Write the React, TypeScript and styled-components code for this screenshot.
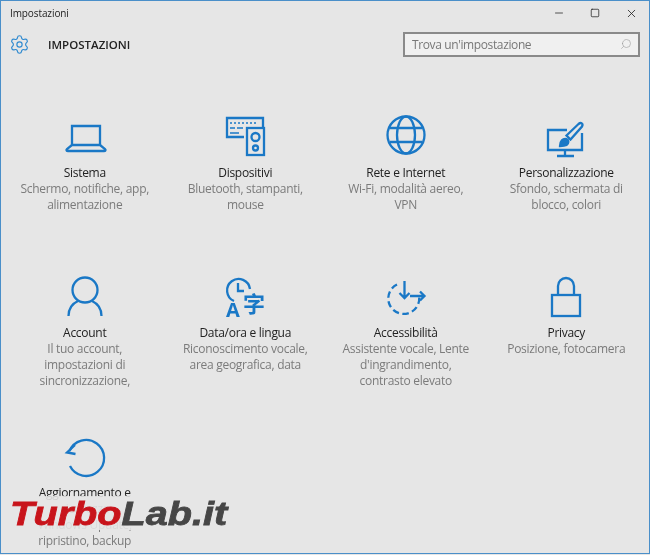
import React from "react";
import styled, { createGlobalStyle } from "styled-components";
import { Settings, Search, Minus, Square, X } from "lucide-react";

const Global = createGlobalStyle`
  html, body { margin: 0; padding: 0; background: #e6e6e6; }
  body { font-family: "Open Sans", "Noto Sans", "Liberation Sans", sans-serif; }
`;

const BLUE = "#1a78c6";

const Page = styled.div`
  position: relative;
  box-sizing: border-box;
  width: 650px;
  height: 554px;
  overflow: hidden;
  background: #e6e6e6;
  border: 1.5px solid #4a8fc9;
  filter: blur(0.3px);
`;

const TitleBar = styled.div`
  display: flex;
  align-items: center;
  justify-content: space-between;
  height: 24px;
  padding-left: 9px;
`;

const WindowName = styled.div`
  font-size: 10px;
  letter-spacing: -0.1px;
  color: #222;
`;

const Controls = styled.div`
  display: flex;
`;

const ControlBtn = styled.div`
  display: flex;
  align-items: center;
  justify-content: center;
  width: 36px;
  height: 24px;
  color: #222;
`;

const Header = styled.div`
  display: flex;
  align-items: center;
  justify-content: space-between;
  height: 38px;
  padding: 0 9px 0 8px;
`;

const Brand = styled.div`
  display: flex;
  align-items: center;
  gap: 18px;
`;

const BrandTitle = styled.div`
  font-size: 11.5px;
  font-weight: 600;
  color: #222;
`;

const SearchBox = styled.div`
  box-sizing: border-box;
  display: flex;
  align-items: center;
  justify-content: space-between;
  width: 237px;
  height: 25px;
  padding: 0 6px 0 7px;
  border: 2px solid #8a8a8a;
  background: #f0f0f0;
`;

const SearchText = styled.span`
  font-size: 12px;
  letter-spacing: -0.38px;
  color: #777;
`;

const SearchIcon = styled.span`
  display: flex;
  transform: scaleX(-1);
`;

const Grid = styled.div`
  display: grid;
  grid-template-columns: repeat(4, 160.5px);
  grid-auto-rows: 160px;
  margin-top: 50px;
  padding-left: 3.5px;
`;

const Card = styled.div`
  display: flex;
  flex-direction: column;
  align-items: center;
`;

const IconSvg = styled.svg`
  width: 60px;
  height: 48px;
  margin-bottom: 4px;
`;

const CardTitle = styled.div`
  font-size: 12px;
  letter-spacing: -0.28px;
  line-height: 16px;
  color: #222;
  white-space: nowrap;
`;

const CardLine = styled.div`
  font-size: 12px;
  letter-spacing: -0.28px;
  line-height: 16px;
  color: #7b7b7b;
  white-space: nowrap;
`;

const LangText = styled.text`
  font-family: "Open Sans", sans-serif;
`;

const CjkText = styled.text`
  font-family: "Noto Sans CJK SC", sans-serif;
`;

const Watermark = styled.div`
  position: absolute;
  left: 9px;
  top: 495px;
  display: flex;
  width: 222px;
  height: 34px;
  background: rgba(230, 230, 230, 0.88);
  font-family: "Liberation Sans", sans-serif;
  font-size: 34px;
  line-height: 34px;
  font-weight: 700;
  font-style: italic;
  white-space: nowrap;
  -webkit-text-stroke: 0.8px currentColor;
`;

const WatermarkInner = styled.div`
  display: flex;
  transform: scaleX(1.165);
  transform-origin: left center;
`;

const Turbo = styled.span`
  color: #c8141b;
`;

const Lab = styled.span`
  color: #464646;
`;

const Ico = ({ children }: { children: React.ReactNode }) => (
  <IconSvg viewBox="0 0 60 48" fill="none" stroke={BLUE} strokeWidth={2.3}>
    {children}
  </IconSvg>
);

const settingsItems = [
  {
    title: "Sistema",
    lines: ["Schermo, notifiche, app,", "alimentazione"],
    icon: (
      <Ico>
        <path d="M17 32V13h28v19" />
        <path d="M17 32l-5 4c-1 1-.5 2 1 2h36c1.500 0 2-1 1-2l-5-4z" />
      </Ico>
    ),
  },
  {
    title: "Dispositivi",
    lines: ["Bluetooth, stampanti,", "mouse"],
    icon: (
      <Ico>
        <path d="M29 24H12V5h36v9" />
        <rect x="32" y="15" width="17" height="27" />
        <circle cx="40.500" cy="24" r="4" />
        <circle cx="40.500" cy="35" r="2.500" />
        <path d="M15 10h27" strokeDasharray="2 2" strokeWidth={1.6} />
        <path d="M15 15h5M22 15h6M15 20h9" strokeWidth={1.6} />
      </Ico>
    ),
  },
  {
    title: "Rete e Internet",
    lines: ["Wi-Fi, modalità aereo,", "VPN"],
    icon: (
      <Ico>
        <circle cx="30" cy="22" r="18.500" />
        <ellipse cx="30" cy="22" rx="9" ry="18.500" />
        <path d="M14 15h32M14 29h32" />
      </Ico>
    ),
  },
  {
    title: "Personalizzazione",
    lines: ["Sfondo, schermata di", "blocco, colori"],
    icon: (
      <Ico>
        <path d="M31 17H12v20h34V20" />
        <path d="M29 38v5M21 43h17" />
        <path d="M24 33c0-5 3-8 6.500-7 2.500 1 2.500 4.500 0 6-2 1-4 1-6.500 1z" fill={BLUE} />
        <path d="M30.500 22.500L42.500 11c2.500-2 5-.5 3.500 2.500L34.500 26.500z" />
      </Ico>
    ),
  },
  {
    title: "Account",
    lines: ["Il tuo account,", "impostazioni di", "sincronizzazione,"],
    icon: (
      <Ico>
        <circle cx="30" cy="17" r="12.500" />
        <path d="M13.500 43c0-7 4-12.500 9.500-15M46.500 43c0-7-4-12.500-9.500-15" />
      </Ico>
    ),
  },
  {
    title: "Data/ora e lingua",
    lines: ["Riconoscimento vocale,", "area geografica, data"],
    icon: (
      <Ico>
        <path d="M19 28a11.500 11.500 0 1 1 16-12" />
        <path d="M23 10v8h6" />
        <LangText x="11" y="44" fontSize="20" fontWeight="700" stroke="none" fill={BLUE}>
          A
        </LangText>
        <CjkText x="28" y="39" fontSize="22" fontWeight="700" stroke="none" fill={BLUE}>
          字
        </CjkText>
      </Ico>
    ),
  },
  {
    title: "Accessibilità",
    lines: ["Assistente vocale, Lente", "d'ingrandimento,", "contrasto elevato"],
    icon: (
      <Ico>
        <path d="M21 11.500a15.500 15.500 0 1 0 22 11" strokeDasharray="6.500 3.500" />
        <path d="M28.500 8v17M23.500 20l5 5 5-5" />
        <path d="M34 23h14M44 18.500l4.500 4.500-4.500 4.500" />
      </Ico>
    ),
  },
  {
    title: "Privacy",
    lines: ["Posizione, fotocamera"],
    icon: (
      <Ico>
        <rect x="16" y="22" width="28" height="21" />
        <path d="M22 22V13a8 8 0 0 1 16 0v9" />
      </Ico>
    ),
  },
  {
    title: "Aggiornamento e",
    lines: ["sicurezza", "Windows Update,", "ripristino, backup"],
    icon: (
      <Ico>
        <path d="M14.500 18A18 18 0 1 1 15 33" />
        <path d="M20 12l-8 7.500 8.500 1.500" />
      </Ico>
    ),
  },
];

export default function App() {
  return (
    <Page>
      <Global />
      <TitleBar>
        <WindowName>Impostazioni</WindowName>
        <Controls>
          <ControlBtn>
            <Minus size={12} strokeWidth={1.5} />
          </ControlBtn>
          <ControlBtn>
            <Square size={10} strokeWidth={1.8} />
          </ControlBtn>
          <ControlBtn>
            <X size={13} strokeWidth={1.5} />
          </ControlBtn>
        </Controls>
      </TitleBar>
      <Header>
        <Brand>
          <Settings size={21} strokeWidth={1.3} color="#2f8ad0" />
          <BrandTitle>IMPOSTAZIONI</BrandTitle>
        </Brand>
        <SearchBox>
          <SearchText>Trova un'impostazione</SearchText>
          <SearchIcon>
            <Search size={12} strokeWidth={1.2} color="#9a9a9a" />
          </SearchIcon>
        </SearchBox>
      </Header>
      <Grid>
        {settingsItems.map((item) => (
          <Card key={item.title}>
            {item.icon}
            <CardTitle>{item.title}</CardTitle>
            {item.lines.map((line) => (
              <CardLine key={line}>{line}</CardLine>
            ))}
          </Card>
        ))}
      </Grid>
      <Watermark>
        <WatermarkInner>
          <Turbo>Turbo</Turbo>
          <Lab>Lab.it</Lab>
        </WatermarkInner>
      </Watermark>
    </Page>
  );
}
